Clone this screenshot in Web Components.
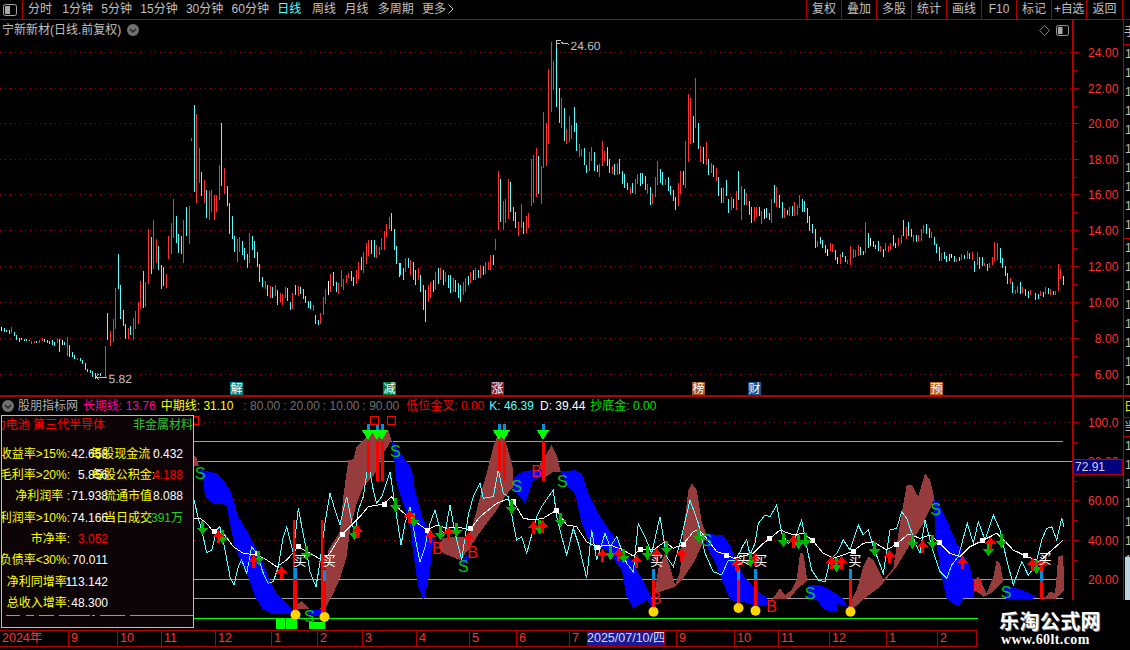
<!DOCTYPE html>
<html lang="zh"><head><meta charset="utf-8"><title>股票图表</title>
<style>
html,body{margin:0;padding:0;background:#000;width:1130px;height:650px;overflow:hidden}
</style></head><body>
<stock-app>
  <tool-bar slot="top"></tool-bar>
  <price-pane slot="upper"></price-pane>
  <indicator-pane slot="lower"></indicator-pane>
  <time-axis slot="time"></time-axis>
  <side-strip slot="side"></side-strip>
  <water-mark slot="mark"></water-mark>
</stock-app>
<script>
const NS='http://www.w3.org/2000/svg';
const FONT=`"Liberation Sans","Noto Sans CJK SC",sans-serif`;
const RED='#b00000';
function el(tag,attrs,text){const e=document.createElementNS(NS,tag);for(const k in attrs)e.setAttribute(k,attrs[k]);if(text!=null)e.textContent=text;return e}
function base(cls,html){return class extends HTMLElement{constructor(){super();this.attachShadow({mode:'open'}).innerHTML=html}}}

/* ---------- root ---------- */
customElements.define('stock-app',base('',`<style>
:host{display:block;position:relative;width:1130px;height:650px;background:#000;overflow:hidden;font:12px ${FONT};color:#c0c0c0}
.row{display:flex;height:627px}
.col{width:1123px;display:flex;flex-direction:column}
</style>
<slot name="top"></slot>
<div class="row"><div class="col"><slot name="upper"></slot><slot name="lower"></slot><slot name="time"></slot></div><slot name="side"></slot></div>
<slot name="mark"></slot>`));

/* ---------- toolbar ---------- */
const panelIcon=`<svg width="14" height="12" viewBox="0 0 14 12"><rect x=".5" y=".5" width="13" height="11" rx="2" fill="none" stroke="#a8a8a8"/><rect x="2" y="2" width="5" height="8" fill="#a8a8a8"/></svg>`;
customElements.define('tool-bar',base('',`<style>
:host{display:flex;height:19px;border-bottom:1px solid ${RED};box-sizing:content-box;line-height:19px;white-space:nowrap}
.ico{width:23px;box-sizing:border-box;border-right:1px solid ${RED};display:flex;align-items:center;justify-content:center;padding-right:2px}
.tabs{display:flex;gap:8.3px;padding-left:5px;flex:1}
.tabs span:first-child{margin-right:2px}
.on{color:#54ffff;margin-right:2.5px}
.mo{margin-right:1px}
.btns{display:flex;padding-right:7px}
.btns span{width:35px;box-sizing:border-box;border-left:1px solid ${RED};text-align:center}
.btns span:last-child{border-right:1px solid ${RED};width:37px}
.plus{letter-spacing:-.4px}
svg.chev{vertical-align:-1px;margin-left:2px}
</style>
<div class="ico">${panelIcon}</div>
<div class="tabs"><span>分时</span><span>1分钟</span><span>5分钟</span><span>15分钟</span><span>30分钟</span><span>60分钟</span><span class="on">日线</span><span>周线</span><span class="mo">月线</span><span>多周期</span><span>更多<svg class="chev" width="6" height="10" viewBox="0 0 6 10"><path d="M.5.5 5 5 .5 9.5" fill="none" stroke="#c0c0c0"/></svg></span></div>
<div class="btns"><span>复权</span><span>叠加</span><span>多股</span><span>统计</span><span>画线</span><span>F10</span><span>标记</span><span class="plus">+自选</span><span>返回</span></div>`));

/* ---------- candles ---------- */
const Z11='4w51,63 13c54,66 19c60,66 28c60,72 34r51,69 43c66,78 49c75,90 58c84,96 64c84,90 73c87,93 79c87,93 88c90,93 94r93,102 103r93,99 109c93,99 118r90,99 127r84,93 133c87,96 142c90,99 148c93,102 157c90,105 163c96,108 172r84,99 178c87,126 187w90,105 193c96,105 202r81,138 208c105,141 217c126,141 223c135,147 232r144,150 241c144,153 247c150,162 256c159,180 262c177,186 271c180,189 277c183,201 286c190,207 292r189,198 301c189,198 316r108,201';
const Z6='22c670,750 31r723,768 40r687,755 46r595,717 55c492,598 61c586,687 70c660,708 76c703,747 85r714,747 91c709,735 100r685,750 106r663,717 115r636,702 121r573,657 130c543,654 136r576,652 145r417,582 154c441,552 160r390,537 169r447,519 175c468,540 184c525,597 190c531,588 199r552,594 205r438,507 214r399,492 220r327,444 229c378,459 235c432,489 244c438,492 250r390,519 259c351,438 268r348,462 274r144,153 283c45,306 289r72,339 298r174,279 304c246,318 313r270,339 319c300,384 328r303,390 334r300,366 343r315,390 349r315,366 358r225,330 364c99,288 373r234,312 382c288,348 388c339,432 397c378,447 403c438,486 412r447,516 418r441,486 427c453,495 433c474,510 442c492,534 448r429,519 457c438,480 463c453,504 472c486,531 478c522,576 487c561,591 496r573,597 502c585,618 511r588,624 517c591,624 526r585,618 532c600,645 541r609,636 547r612,645 556r591,624 562c594,633 571c636,660 577r609,657 586c585,615 595r588,618 601c591,612 610c597,627 616c618,639 625c633,654 631c633,657 640r645,663 646c675,702 655c690,705 661r669,702 670r621,675 676r597,642 685w573,615 691r552,606 700c546,588 709c576,606 715r579,612 724r540,591 730r567,600 739r555,579 745r549,564 754c543,573 760c561,588 769r540,582 775r516,567 784c501,540 790r486,549 799r459,522 805r450,498 814c450,492 823c450,501 829r465,504 838r471,495 844r444,480 853r423,480 859r402,441 868r381,417 874c369,423 883c417,480 889c468,522 897c519,561';
const MID=[[400,'c',263,275],[403,'c',268,280],[405,'r',258,272],[408,'c',258,268],[410,'r',260,275],[413,'c',262,280],[415,'c',270,285],[418,'r',268,280],[420,'c',275,292],[423,'c',285,310],[425,'c',290,322],[428,'r',285,302],[430,'r',282,298],[433,'c',280,292],[435,'r',272,290],[438,'c',268,284],[440,'r',268,280],[443,'c',270,285],[445,'r',272,282],[448,'c',275,288],[450,'c',275,293],[453,'r',278,292],[455,'c',280,292],[458,'c',283,298],[460,'c',285,302],[463,'r',282,295],[465,'r',278,292],[468,'c',276,285],[470,'r',272,283],[473,'c',270,280],[475,'r',268,280],[478,'c',270,278],[480,'r',265,278],[483,'c',266,275],[485,'r',262,274],[488,'r',262,270],[490,'r',255,270],[493,'c',255,265]];
const Z7='46r627,660 55r423,600 61c447,576 70r513,600 76r507,579 85r447,567 91c456,546 100c531,573 106c546,594 115r576,618 124r522,594 130c576,612 139r558,609 145r549,594 154r387,528 160r375,519 169r354,501 175c378,492 184r408,522 190r246,414 199r279,408 205r117,342 214r36,246 220r93,180 229c36,231 238c174,279 244r204,294 253c234,333 259r297,342 268r258,336 274r285,327 283c231,306 289c279,363 298r342,381 304r357,378 313c354,405 319c405,429 328r366,423 334r351,393 343c366,423 352c405,426 358r402,441 367r333,408 373r363,393 382c351,408 388c387,429 397r408,432 403c402,435 412r399,435 418c387,432 427c423,462 433c432,474 442c459,480 451r471,492 457c459,489 466r447,492 472r432,462 481c429,468 487c429,462 496c438,480 502r462,492 511c471,525 517r489,522 526r441,501 532r393,465 541c417,459 547c426,465 556r447,465 565c441,483 571c468,495 580c480,513 586c501,540 595r459,528 601r423,492 610c423,465 616r333,474 625r192,396 631r204,342 640c258,339 646r144,294 655c279,357 661r348,396 670c351,402 679r336,405 685c387,435 694r399,429 700c405,441 709r414,453 715c441,498 724c474,519 730r471,519 739c450,498 745c507,549 754r501,540 760c507,534 769r483,540 775c423,510 784r468,570 793c477,525 799r489,525 808c513,555 814c531,579 823r531,573 829r531,561 838c531,558 844r543,582 853w537,567 859c534,564 868c549,570 874r507,579 883c465,519 889r471,531 897c495,534';
const Z8='7c156,204 13r174,204 22c180,195 28r171,198 37c168,198 43r156,198 52r165,195 58r135,174 67c147,186 73c153,186 82c174,219 88c198,243 97c222,249 106c237,294 112r273,291 121c261,282 127c270,294 136c285,309 142w297,318 151r279,303 157r282,306 166c300,330 172c321,342 181r312,342 187c306,321 196c318,336 202r330,342 211r288,345 220r297,324 226r300,321 235r285,318 241c291,315 250c303,315 256r216,309 265c249,294 271w264,288 280c273,291 286c285,297 295c273,303 301r288,306 310c297,321 316r279,303 325r288,306 331r279,300 340c255,288 346c279,294 355r264,288 364r255,282 370c210,258 379r231,267 385c216,258 394c237,261 400r255,276 409c255,276 415r255,273 424r237,273 430r225,249 439c222,252 448c234,264 454r246,264 463c261,285 469c282,309 478c291,333 484r309,333 493c306,327 499c318,336 508c312,333 514w312,324 523c318,336 529r327,336 538c321,333 544r312,330 553c315,327 562r303,327 568c309,327 577r306,330 583c333,366 592r306,345 598c321,357 607c321,348 613r339,348 622c342,363 628r339,354 637r321,345 643r276,333 652r279,330 661c294,339 667c324,354 676c348,378 682c369,402 691r384,402 697c396,429 706r420,432 712r408,429 721c396,432 727r411,429 736c417,438 745c423,444 751r420,435 766c429,450 775c432,447 781r423,438 790c426,441 796r411,432 805c414,432 811r417,435 820c423,435 826r423,435 835r342,423 841r357,387 850c378,405';
const COL={r:'#ff3232',c:'#54ffff',w:'#ffffff'};

customElements.define('price-pane',class extends HTMLElement{
 constructor(){super();const s=this.attachShadow({mode:'open'});
 s.innerHTML=`<style>
 :host{display:flex;height:375px}
 .left{width:1072px;display:flex;flex-direction:column}
 .title{height:20px;display:flex;align-items:center;padding:0 3px 0 2px;line-height:20px;white-space:nowrap}
 .title b{font-weight:400}
 .chev{margin-left:6px}
 .sp{flex:1}
 .dia{margin-right:6px}
 svg.plot{display:block}
 </style>
 <div class="left">
  <div class="title"><b>宁新新材(日线.前复权)</b><svg class="chev" width="12" height="12" viewBox="0 0 12 12"><circle cx="6" cy="6" r="6" fill="#707070"/><path d="M3 5l3 3 3-3" fill="none" stroke="#222" stroke-width="1.4"/></svg><span class="sp"></span>
  <svg class="dia" width="11" height="11" viewBox="0 0 11 11"><path d="M5.5.5l5 5-5 5-5-5z" fill="none" stroke="#808080"/></svg>${panelIcon.replace('width="14" height="12"','width="13" height="11"')}</div>
  <svg class="plot" width="1072" height="355" viewBox="0 40 1072 355" shape-rendering="crispEdges"></svg>
 </div>
 <value-axis top="20" height="375"></value-axis>`;
 const g=s.querySelector('svg.plot');
 [52,88,123,159,194,230,266,302,338,374].forEach(y=>g.append(el('line',{x1:0,x2:1072,y1:y+.5,y2:y+.5,stroke:'#a00000','stroke-dasharray':'1 4'})));
 const bar=(x,c,t,b)=>g.append(el('rect',{x:Math.floor(x),y:Math.floor(t),width:1,height:Math.max(1,Math.round(b-t)),fill:COL[c]}));
 const parse=(str,bx,by)=>str.split(' ').forEach(t=>{const m=t.match(/(\d+)([rcw])(\d+),(\d+)/);bar(bx+m[1]/3,m[2],by+m[3]/3,by+m[4]/3)});
 parse(Z11,0,310);parse(Z6,100,90);MID.forEach(m=>bar(m[0],m[1],m[2],m[3]));parse(Z7,480,30);parse(Z8,780,150);
 const T=(x,y,t)=>el('text',{x,y,fill:'#c0c0c0','font-size':12,'font-family':'Liberation Sans',style:'text-rendering:geometricPrecision'},t);
 g.append(el('path',{d:'M556.5 47V40.5H561M556.5 43.5H560M561 42l3 2 3-1 2 2',fill:'none',stroke:'#c0c0c0'}));
 g.append(T(570.5,50,'24.60'));
 g.append(el('path',{d:'M96 377H107M99 374l-3 3 3 3',fill:'none',stroke:'#c0c0c0'}));
 g.append(T(108.5,383,'5.82'));
 [[230,'解','#008080'],[383,'减','#0a7a2e'],[491,'涨','#8a1c1c'],[692,'榜','#a4521a'],[748,'财','#14508c'],[930,'预','#c0641a']].forEach(([x,t,c])=>{
  g.append(el('rect',{x,y:382,width:13,height:13,fill:c}));
  g.append(el('text',{x:x+.5,y:393,fill:'#fff','font-size':12,'font-family':'Noto Sans CJK SC'},t));
 });
}});

/* ---------- value axis ---------- */
customElements.define('value-axis',class extends HTMLElement{
 connectedCallback(){ if(this.shadowRoot) return;
  const s=this.attachShadow({mode:'open'});const top=+this.getAttribute('top'),h=+this.getAttribute('height');
  s.innerHTML=`<style>:host{display:block;width:51px;box-sizing:border-box;border-left:2px solid ${RED};position:relative}
  svg{display:block}
  .tag{position:absolute;left:0;top:${459-top}px;width:49px;height:16px;box-sizing:border-box;border:1px solid ${RED};border-left:0;background:#000080;color:#d0d0e8;font:12px ${FONT};line-height:14px;padding-left:1px}
  </style><svg width="49" height="${h}" viewBox="0 ${top} 49 ${h}"></svg>${this.hasAttribute('tag')?`<div class="tag">${this.getAttribute('tag')}</div>`:''}`;
  const g=s.querySelector('svg');
  const lab=this.getAttribute('labels');
  const items=lab?JSON.parse(lab):[[52,'24.00'],[88,'22.00'],[123,'20.00'],[159,'18.00'],[194,'16.00'],[230,'14.00'],[266,'12.00'],[302,'10.00'],[338,'8.00'],[374,'6.00']];
  items.forEach(([y,t],i)=>{
   g.append(el('line',{x1:0,x2:5,y1:y+.5,y2:y+.5,stroke:RED,'shape-rendering':'crispEdges'}));
   g.append(el('text',{x:44.5,y:y+4.5,fill:'#ff3232','font-size':12,'letter-spacing':.1,'font-family':'Liberation Sans','text-anchor':'end'},t));
   if(i<items.length-1){const m=Math.round((y+items[i+1][0])/2);g.append(el('line',{x1:0,x2:3,y1:m+.5,y2:m+.5,stroke:RED,'shape-rendering':'crispEdges'}))}
  });
 }
});

/* ---------- indicator pane ---------- */
const P=(b,str)=>str.trim().split(/\s+/).map(p=>{const[a,c]=p.split(',');return[(b+a/3),(390+c/3)]});
const S=a=>a.map(p=>p[0].toFixed(1)+','+p[1].toFixed(1)).join(' ');
const BROWN=[[340,'-60,665 -45,560 -35,480 0,425 10,320 25,210 40,208 50,170 75,145 110,125 145,122 155,150 130,190 100,260 70,290 50,340 30,420 20,500 0,565 -20,610 -45,655'],
[0,'582,195 590,205 596,228 582,228'],[0,'880,655 905,632 930,658'],
[340,'295,465 310,445 340,440 385,440 400,400 425,300 440,250 460,170 475,130 495,150 510,200 520,240 520,290 495,320 470,360 440,400 410,440 385,480 360,510 310,490'],
[340,'600,220 620,190 635,165 650,195 662,245 640,245 610,265'],
[340,'945,605 955,535 975,490 990,530 1005,585 1020,545 1030,430 1045,300 1055,280 1070,300 1085,395 1100,435 1060,520 1030,565 1005,590 960,605'],
[730,'125,630 150,595 165,615 185,600 200,570 210,490 220,490 232,570 200,600 180,625 130,628'],
[730,'355,650 380,600 400,530 415,500 430,510 460,570 490,535 510,400 530,285 545,285 565,320 585,250 600,270 610,310 612,330 580,400 530,480 500,530 450,590 410,620 370,655'],
[730,'735,570 745,560 770,610 790,560 800,510 810,520 820,575 790,605 760,620 735,600'],
[730,'940,628 960,605 975,610 985,500 1000,495 1002,600 975,628']];
const BLUE=[[0,'600,240 650,250 670,270 695,310 700,330 715,380 745,430 775,490 790,520 805,560 830,610 860,640 875,660 870,672 820,672 790,660 765,620 750,575 730,530 705,475 690,400 680,345 640,340 615,320 610,270'],
[0,'925,660 965,658 960,680 925,672'],
[340,'155,150 185,195 215,235 225,300 250,390 270,425 280,450 270,540 252,632 235,590 220,490 210,400 170,280 162,200'],
[340,'380,495 390,500 370,525 360,512'],
[340,'520,265 545,245 580,240 605,240 610,260 580,270 570,300 555,340 540,320 520,300'],
[340,'662,245 705,240 725,250 745,310 775,370 800,410 830,450 860,500 880,520 930,610 940,655 920,630 880,655 860,620 845,540 800,480 745,450 725,400 705,310 680,285'],
[340,'1095,432 1150,435 1170,465 1185,500 1205,550 1240,590 1280,625 1285,645 1245,650 1230,640 1200,635 1170,630 1150,580 1130,530 1100,470'],
[730,'235,585 270,585 300,600 340,625 350,650 320,640 320,665 285,660 260,630 235,625'],
[730,'612,330 625,335 650,390 680,460 720,530 735,600 730,625 700,625 685,650 650,625 635,560 615,430'],
[730,'820,585 860,595 900,610 930,625 830,628']];
const CYAN=[...P(0,'582,330 595,385 605,420 620,488 635,480 650,420 660,410 675,480 690,560 702,585 715,530 725,510 740,550 755,470 770,490 790,550 805,580 820,575 835,530 850,440 860,410 870,450 880,490 895,355 915,460 930,545 948,590 958,530 975,400 990,310 1005,360 1020,405'),
...P(340,'10,360 20,320 30,370 45,440 55,360 70,320 85,220 100,300 110,340 125,320 150,245 170,380 183,465 195,400 210,350 225,440 240,515 255,470 270,400 285,360 300,420 315,430 330,345 345,430 365,510 385,375 400,320 420,280 430,325 460,320 475,240 490,310 505,320 520,400 530,450 545,440 560,490 590,380 605,350 625,320 640,300 650,380 665,440 680,495 700,415 715,460 740,565 755,420 770,510 795,430 810,470 830,440 860,520 880,545 895,400 915,440 935,490 960,380 980,500 1000,530 1020,460 1050,330 1075,400 1095,490 1120,545 1145,555 1165,510 1185,510 1200,485'),
...P(730,'40,465 50,450 60,495 75,460 85,400 105,375 120,380 140,345 155,430 175,460 195,445 215,390 230,470 245,540 265,570 285,575 300,510 320,490 340,450 360,480 385,405 400,435 415,420 430,470 460,550 480,420 500,415 515,365 530,385 560,470 570,490 585,390 605,470 630,545 650,565 665,525 685,500 712,400 730,460 745,395 765,450 790,375 810,420 830,510 850,585 875,515 895,555 915,530 935,450 950,415 965,410 980,450 995,385 1002,410')];
const WHITE=[...P(0,'582,385 600,385 620,400 640,425 670,430 700,470 730,490 770,495 800,510 830,530 860,510 895,470 930,490 965,510 990,490 1020,440'),
...P(340,'30,410 60,380 85,350 130,342 155,320 180,360 220,390 260,420 290,405 320,415 350,410 390,420 420,380 470,340 500,328 520,335 550,385 580,390 610,385 650,360 680,405 710,410 740,455 770,470 810,465 850,480 880,498 900,478 940,480 975,455 1000,475 1030,462 1060,425 1075,418 1100,445 1130,485 1160,495 1180,505 1200,500'),
...P(730,'70,490 100,460 120,445 150,420 190,435 220,430 247,450 280,490 310,505 340,495 370,483 400,460 430,455 470,480 500,462 535,432 570,445 600,435 628,458 660,490 690,500 720,470 757,452 800,430 850,480 885,497 930,515 960,485 1000,450')];
const SQ=[[0,'642,423 771,491 895,470'],[340,'8,432 133,342 262,420 391,416 521,335 649,360 772,471 902,477 1031,462 1159,495'],[730,'118,446 248,450 371,483 500,462 628,458 757,452 886,497']];
const DOWN=[[0,'605,415 665,440 775,505 918,490'],[340,'42,430 165,345 218,390 300,430 347,420 513,352 597,410 659,390 810,490 850,498 922,490 978,475 1075,438'],[730,'60,510 158,450 203,455 225,450 318,525 432,478 546,457 605,455 775,477 812,452 917,530']];
const UP=[[0,'655,440 758,515 843,550 972,520'],[340,'50,425 208,380 270,440 323,432 384,448 580,415 605,410 787,497 833,495 887,515 947,495 1022,495 1188,525'],[730,'20,525 75,510 190,455 302,520 333,518 477,502 575,470 695,520 780,462 907,525 933,525']];

customElements.define('indicator-pane',class extends HTMLElement{
 constructor(){super();const s=this.attachShadow({mode:'open'});
 s.innerHTML=`<style>
 :host{display:flex;height:233px;border-top:2px solid ${RED};position:relative}
 .left{width:1072px;display:flex;flex-direction:column}
 .head{height:18px;display:flex;align-items:center;padding-left:2px;white-space:nowrap;line-height:18px}
 .head span{margin-left:6px}
 .head .d{color:#707070;margin-left:3px}
 svg.plot{display:block}
 </style>
 <div class="left">
 <div class="head"><svg width="12" height="12" viewBox="0 0 12 12"><circle cx="6" cy="6" r="6" fill="#707070"/><path d="M3 5l3 3 3-3" fill="none" stroke="#222" stroke-width="1.4"/></svg>
 <span style="margin-left:4px;color:#b0b0b0">股朋指标网</span><span style="color:#ff00a0;margin-left:5px">长期线: 13.76</span><span style="color:#ffff00;margin-left:5px">中期线: 31.10</span><span class="d" style="margin-left:10px">: 80.00</span><span class="d">: 20.00</span><span class="d">: 10.00</span><span class="d">: 90.00</span><span style="color:#ff0000;margin-left:7px">低位金叉: 0.00</span><span style="color:#54ffff;margin-left:5px">K: 46.39</span><span style="color:#fff">D: 39.44</span><span style="color:#00e000;margin-left:5px">抄底金: 0.00</span></div>
 <svg class="plot" width="1072" height="215" viewBox="0 415 1072 215" shape-rendering="crispEdges"></svg>
 </div>
 <value-axis top="397" height="233" tag="72.91" labels='[[422,"100.0"],[461,"80.00"],[500,"60.00"],[540,"40.00"],[579,"20.00"]]'></value-axis>
 <finance-panel></finance-panel>`;
 const g=s.querySelector('svg.plot');
 [422,461,500,540].forEach(y=>g.append(el('line',{x1:194,x2:1072,y1:y+.5,y2:y+.5,stroke:'#a00000','stroke-dasharray':'1 4'})));
 [[441,1063],[461,1072],[579,1063],[598,1063]].forEach(([y,e])=>g.append(el('line',{x1:194,x2:e,y1:y+.5,y2:y+.5,stroke:'#a0a0a0'})));
 g.append(el('line',{x1:194,x2:978,y1:618.5,y2:618.5,stroke:'#00ff00'}));
 BROWN.forEach(([b,p])=>g.append(el('polygon',{points:S(P(b,p)),fill:'#963c3c'})));
 BLUE.forEach(([b,p])=>g.append(el('polygon',{points:S(P(b,p)),fill:'#0000ff'})));
 g.append(el('polyline',{points:S(CYAN),fill:'none',stroke:'#54ffff'}));
 g.append(el('polyline',{points:S(WHITE),fill:'none',stroke:'#ffffff'}));
 SQ.forEach(([b,p])=>P(b,p).forEach(([x,y])=>g.append(el('rect',{x:Math.round(x-2.5),y:Math.round(y-2.5),width:5,height:5,fill:'#fff'}))));
 const R=(x,y,w,h,f)=>g.append(el('rect',{x,y,width:w,height:h,fill:f}));
 /* sell bars + bright triangles */
 [[85,250],[110,275],[125,275],[476,245],[491,275],[610,275]].forEach(([z,b])=>{
  const x=Math.round(340+z/3);
  R(x-1,424,3,7,'#0090e0');R(x-1,441,3,Math.round((b-155)/3),'#ff0000');
  g.append(el('polygon',{points:`${x-6},430 ${x+6},430 ${x},440`,fill:'#00ff00'}));
 });
 /* buy bars */
 [[292.7,390,678,0],[320.7,390,680,0]].forEach(([x,t,b])=>R(Math.round(x),390+t/3,2,(b-t)/3,'#ff0000'));
 [[295,535,665,674],[323.5,540,670,681],[652.7,537,650,665],[738,537,640,654],[755,537,650,662],[850.3,537,645,665],[1040.7,540,628,0]].forEach(([x,t,b,c])=>{
  x=Math.round(x);R(x-1,390+Math.round(t/3),3,11,'#0090e0');R(x-1,390+Math.round(t/3)+11,3,Math.round((b-t)/3)-11,'#ff0000');
  if(c)g.append(el('circle',{cx:x+.5,cy:390+c/3,r:5,fill:'#ffd400','shape-rendering':'geometricPrecision'}));
 });
 /* arrows */
 DOWN.forEach(([b,p])=>P(b,p).forEach(([x,y])=>{x=Math.round(x);y=Math.round(y);R(x-1,y-7,3,8,'#00b400');
  g.append(el('polygon',{points:`${x-5},${y} ${x+6},${y} ${x+.5},${y+7}`,fill:'#00b400'}))}));
 UP.forEach(([b,p])=>P(b,p).forEach(([x,y])=>{x=Math.round(x);y=Math.round(y);R(x-1,y-1,3,7,'#ff0000');
  g.append(el('polygon',{points:`${x-5},${y} ${x+6},${y} ${x+.5},${y-7}`,fill:'#ff0000'}))}));
 /* hollow squares */
 [[374.3,420],[391.3,420]].forEach(([x,y])=>g.append(el('rect',{x:Math.round(x-4)+.5,y:y-3.5,width:8,height:8,fill:'none',stroke:'#ff0000'})));
 g.append(el('path',{d:'M194 416.5H198.5V424.5H194',fill:'none',stroke:'#ff0000'}));
 /* letters */
 const L=(pts,t,c,fs,fam)=>pts.forEach(([b,p])=>P(b,p).forEach(([x,y])=>g.append(el('text',{x,y:y+fs*.36,fill:c,'font-size':fs,'font-family':fam,'text-anchor':'middle','shape-rendering':'auto'},t))));
 L([[0,'600,250 928,680'],[340,'166,185 370,530 530,288 667,275 1100,450'],[730,'240,610 617,358 828,607']],'S','#00c800',16,'Liberation Sans');
 L([[340,'292,475 398,488 590,243 948,625'],[730,'125,650 742,587']],'B','#ff1010',16,'Liberation Sans');
 L([[0,'900,510 988,510'],[340,'950,510'],[730,'40,505 92,510 375,510 945,505']],'买','#ffffff',13,'Noto Sans CJK SC');
 /* green blocks */
 [[276,9],[286,11],[309,16]].forEach(([x,w],i)=>R(x,i==2?622:619,w,i==2?7:10,'#00ff00'));
}});

/* ---------- finance panel ---------- */
const ROWS=[['净资产收益率>15%:','42.658','#fff','每股现金流 :','0.432','#fff',0],['销售毛利率>20%:','5.856','#fff','每股公积金:','4.188','#ff0000',2],['净利润率 :','71.938','#fff','流通市值','8.088','#fff',5],['营业利润率>10%:','74.166','#fff','当日成交','2391万','#20d020',5],['市净率:','3.052','#ff0000','','','',0],['资产负债率<30%:','70.011','#fff','','','',0],['净利同增率:','113.142','#fff','','','',0],['总收入增率:','48.300','#fff','','','',0]];
customElements.define('finance-panel',class extends HTMLElement{
 constructor(){super();const s=this.attachShadow({mode:'open'});
 s.innerHTML=`<style>
 :host{position:absolute;left:1px;top:18px;width:193px;height:213px;box-sizing:border-box;border:1px solid #c0c0c0;background:#0c0406;overflow:hidden;white-space:nowrap;font-size:12px}
 .hd{height:18px;line-height:18px;display:flex;justify-content:space-between;margin-bottom:9.5px}
 .a{display:flex;justify-content:flex-end;color:#ff0000;margin-left:0;width:103px}.a span{flex:none}
 .b{color:#30c030;margin-left:auto}
 .r{display:grid;grid-template-columns:68px 38px 49px 26px;height:21.4px;line-height:21.4px}
 .c{display:flex;justify-content:flex-end;min-width:0}.c span{flex:none}
 .l{color:#ffff00}
 .g{display:block;height:2px;margin-top:.6px}
 </style>
 <div class="hd"><div class="a"><span>新能源动力电池 第三代半导体</span></div><div class="b"><span>非金属材料</span></div></div>
 ${ROWS.map(r=>`<div class="r"><div class="c l"><span>${r[0]}</span></div><div class="c"><span style="color:${r[2]}">${r[1]}</span></div><div class="c l"><span style="margin-right:${r[6]}px">${r[3]}</span></div><div class="c"><span style="color:${r[5]}">${r[4]}</span></div></div>`).join('')}
 <svg class="g" width="191" height="2" viewBox="0 0 191 2"><path d="M4 .5H18M24 .5H32M37 .5H52M57 .5H88M90 .5H93M98 .5H123M128 .5H191" stroke="#00ff00" shape-rendering="crispEdges"/></svg>`;
}});

/* ---------- time axis ---------- */
customElements.define('time-axis',class extends HTMLElement{
 constructor(){super();const s=this.attachShadow({mode:'open'});
 const ticks=[[0,'2024年'],[68,'9'],[117,'10'],[161,'11'],[215,'12'],[271,'1'],[317,'2'],[362,'3'],[416,'4'],[469,'5'],[516,'6'],[569,'7'],[587,'',1],[664,''],[676,'9'],[734,'10'],[778,'11'],[829,'12'],[886,'1'],[937,'2'],[976,'3'],[1123,'']];
 let h='';
 for(let i=0;i<ticks.length-1;i++){const[x,t,on]=ticks[i];const w=ticks[i+1][0]-x;
  h+= on?`<div class="cell on" style="width:${w}px"><span>2025/07/10/四</span></div>`:`<div class="cell" style="width:${w}px">${t}</div>`;}
 s.innerHTML=`<style>
 :host{display:block;width:1123px;height:20px;overflow:hidden}
 .t{display:flex;height:17px;box-sizing:border-box;border-top:1px solid ${RED};border-bottom:1px solid ${RED};color:#ff3232;line-height:15px;font-size:12.5px;white-space:nowrap}
 .cell{box-sizing:border-box;border-left:1px solid ${RED};padding-left:2px;overflow:hidden;flex:none}
 .cell:first-child{border-left:0;padding-left:2px}
 .on{background:#1a1a96;color:#d8d8f0;padding:0;font-size:12.5px;text-align:center;border:0}
 .b{display:flex;height:3px;overflow:hidden;color:#d0d0d0;font-size:11px;line-height:12px;white-space:nowrap}
 .b span{flex:none;box-sizing:border-box;border-left:1px solid ${RED};padding-left:3px}
 .b i{font-style:normal;color:#54ffff}
 </style><div class="t">${h}</div>
 <div class="b"><span style="width:44px">批量</span><span style="width:30px"></span><span style="width:53px"></span><span style="width:54px"></span><span style="width:60px"></span><span style="width:55px"></span><span style="width:60px"></span><span style="width:52px"></span><span style="width:52px"></span><span style="width:60px"></span><span style="width:55px"></span><span style="width:60px"></span><span style="width:55px"></span><span style="width:60px"></span><span style="width:55px"></span><span style="width:60px"></span><span style="width:60px"></span><span style="width:72px;text-align:right"><i>模板</i></span></div>`;
}});

/* ---------- side strip ---------- */
customElements.define('side-strip',class extends HTMLElement{
 constructor(){super();const s=this.attachShadow({mode:'open'});
 const rows=n=>Array.from({length:n},(_,i)=>`<div class="n">1${(i*7)%10}.${(i*3)%10}</div>`).join('');
 s.innerHTML=`<style>
 :host{display:flex;flex-direction:column;width:7px;box-sizing:border-box;border-left:1px solid ${RED};overflow:hidden;white-space:nowrap;height:580px;color:#c0c0c0;font-size:12px;line-height:19px}
 .top{height:25px;border-bottom:1px solid ${RED};box-sizing:border-box;line-height:24px;margin-top:0;flex:none}
 .sec{overflow:hidden;border-bottom:1px solid ${RED};box-sizing:border-box;flex:none;padding-left:1px}
 .n{height:19px}
 .y{color:#e8e800;height:21px;line-height:21px;flex:none;border-bottom:1px solid ${RED};box-sizing:border-box}
 .q{background:#b8d4e0;height:43px;margin-left:1px;flex:none}
 .x{height:19px;flex:none;border-bottom:1px solid ${RED};box-sizing:border-box;line-height:18px}
 </style>
 <div class="top">手</div>
 <div class="sec" style="height:194px">${rows(11)}</div>
 <div class="sec" style="height:158px;border-bottom:2px solid ${RED}">${rows(9)}</div>
 <div class="y">日</div><div class="x">当</div>
 <div class="sec" style="height:120px;border:0">${rows(7)}</div>
 <div class="q"></div>`;
}});

/* ---------- watermark ---------- */
customElements.define('water-mark',base('',`<style>
:host{position:absolute;left:978px;top:600px;width:152px;height:50px;background:#000;color:#fff;overflow:hidden;box-sizing:border-box;padding:9px 0 0 21px;z-index:5}
.a{font:700 20px "Noto Sans CJK SC",sans-serif;line-height:24px;letter-spacing:.4px;text-shadow:1px 1px 0 #888}
.b{font:700 14px "Liberation Serif",serif;line-height:16px;margin-left:2px;margin-top:-1px;letter-spacing:.4px}
</style><div class="a">乐淘公式网</div><div class="b">www.60lt.com</div>`));
</script>
</body></html>
